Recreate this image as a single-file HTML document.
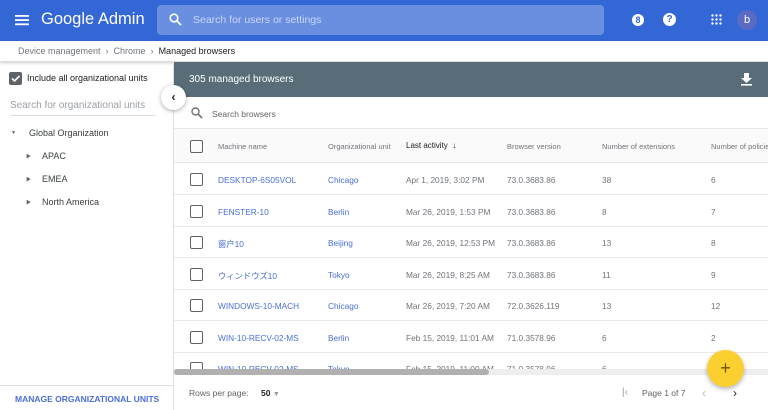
<!DOCTYPE html><html><head><meta charset="utf-8"><style>
*{box-sizing:border-box;margin:0;padding:0}
body{width:768px;height:410px;overflow:hidden;font-family:"Liberation Sans","Noto Sans CJK JP",sans-serif;background:#fff;position:relative;color:#3c4043}
.a{position:absolute;white-space:nowrap}
.hdr{left:0;top:0;width:768px;height:41px;background:#3367d6}
.sb{left:157px;top:5px;width:447px;height:30px;background:#6b8fe0;border-radius:4px}
.cb{width:13px;height:13px;border:1.6px solid #5f6368;border-radius:2px}
.row{left:174px;width:594px;height:31.5px;border-bottom:1px solid #e8e8e8;font-size:8.3px;color:#70757a}
.row span{position:absolute;top:12px}
.lk{color:#4a6fd6}
.tri{font-size:5px;color:#5f6368}
</style></head><body>
<div class="a hdr"></div>
<svg class="a" style="left:15px;top:14px" width="14" height="12"><rect y="1" width="14" height="1.8" fill="#fff"/><rect y="5.2" width="14" height="1.8" fill="#fff"/><rect y="9.4" width="14" height="1.8" fill="#fff"/></svg>
<div class="a" style="left:41px;top:10px;font-size:16.5px;color:#fff">Google Admin</div>
<div class="a sb"></div>
<svg class="a" style="left:169px;top:13px" width="13" height="13"><circle cx="5" cy="5" r="3.8" stroke="#fff" stroke-width="1.6" fill="none"/><line x1="8" y1="8" x2="12" y2="12" stroke="#fff" stroke-width="1.8"/></svg>
<div class="a" style="left:193px;top:14px;font-size:10.5px;color:#c8d6f5">Search for users or settings</div>
<div class="a" style="left:632px;top:14px;width:12px;height:12px;border-radius:50%;background:#fff;color:#3367d6;font-size:9px;text-align:center;line-height:12px;font-weight:bold">8</div>
<div class="a" style="left:663px;top:13px;width:13px;height:13px;border-radius:50%;background:#fff;color:#3367d6;font-size:10px;text-align:center;line-height:13px;font-weight:bold">?</div>
<svg class="a" style="left:711px;top:14px" width="11" height="11" fill="#fff"><circle cx="1.5" cy="1.5" r="1.2"/><circle cx="5.5" cy="1.5" r="1.2"/><circle cx="9.5" cy="1.5" r="1.2"/><circle cx="1.5" cy="5.5" r="1.2"/><circle cx="5.5" cy="5.5" r="1.2"/><circle cx="9.5" cy="5.5" r="1.2"/><circle cx="1.5" cy="9.5" r="1.2"/><circle cx="5.5" cy="9.5" r="1.2"/><circle cx="9.5" cy="9.5" r="1.2"/></svg>
<div class="a" style="left:737px;top:10px;width:20px;height:20px;border-radius:50%;background:#5a6bc4;color:#fff;font-size:11px;text-align:center;line-height:20px">b</div>
<div class="a" style="left:0;top:41px;width:768px;height:21px;border-bottom:1px solid #ddd;box-shadow:0 1px 3px rgba(0,0,0,.2)"></div>
<div class="a" style="left:18px;top:46px;font-size:9px;color:#70757a">Device management &nbsp;›&nbsp; Chrome &nbsp;›&nbsp; <span style="color:#202124">Managed browsers</span></div>
<div class="a" style="left:173px;top:62px;width:1px;height:348px;background:#e0e0e0"></div>
<div class="a" style="left:9px;top:72px;width:13px;height:13px;background:#5f6368;border-radius:2px"></div>
<svg class="a" style="left:9px;top:72px" width="13" height="13"><path d="M3 6.5l2.5 2.5L10.5 4" stroke="#fff" stroke-width="1.6" fill="none"/></svg>
<div class="a" style="left:27px;top:73px;font-size:9px;color:#202124">Include all organizational units</div>
<div class="a" style="left:10px;top:100px;font-size:10px;color:#9aa0a6">Search for organizational units</div>
<div class="a" style="left:10px;top:115px;width:146px;height:1px;background:#ddd"></div>
<div class="a tri" style="left:11px;top:130px">▼</div>
<div class="a" style="left:29px;top:128px;font-size:9px;color:#3c4043">Global Organization</div>
<div class="a tri" style="left:26px;top:153px">▶</div><div class="a" style="left:42px;top:151px;font-size:9px">APAC</div>
<div class="a tri" style="left:26px;top:176px">▶</div><div class="a" style="left:42px;top:174px;font-size:9px">EMEA</div>
<div class="a tri" style="left:26px;top:199px">▶</div><div class="a" style="left:42px;top:197px;font-size:9px">North America</div>
<div class="a" style="left:0;top:385px;width:173px;height:1px;background:#e0e0e0"></div>
<div class="a" style="left:15px;top:394px;font-size:8.5px;color:#4a6fd6;font-weight:bold">MANAGE ORGANIZATIONAL UNITS</div>
<div class="a" style="left:174px;top:62px;width:594px;height:35px;background:#586d77"></div>
<div class="a" style="left:189px;top:74px;font-size:10px;color:#fff">305 managed browsers</div>
<svg class="a" style="left:741px;top:73px" width="11" height="13" fill="#fff"><path d="M3 0h5v5h3L5.5 10 0 5h3z"/><rect y="11" width="11" height="1.6"/></svg>
<div class="a" style="left:161px;top:85px;width:25px;height:25px;border-radius:50%;background:#fff;box-shadow:0 1px 4px rgba(0,0,0,.35);text-align:center;line-height:24px;font-size:12px;font-weight:bold;color:#202124">‹</div>
<svg class="a" style="left:191px;top:107px" width="12" height="12"><circle cx="4.5" cy="4.5" r="3.5" stroke="#70757a" stroke-width="1.4" fill="none"/><line x1="7" y1="7" x2="11" y2="11" stroke="#70757a" stroke-width="1.6"/></svg>
<div class="a" style="left:212px;top:109px;font-size:8.5px;color:#5f6368">Search browsers</div>
<div class="a" style="left:174px;top:128px;width:594px;height:35px;background:#fafafa;border-top:1px solid #e8e8e8;border-bottom:1px solid #e8e8e8;font-size:7.5px;color:#70757a">
<div class="a cb" style="left:16px;top:11px"></div>
<span class="a" style="left:44px;top:13px">Machine name</span><span class="a" style="left:154px;top:13px">Organizational unit</span><span class="a" style="left:232px;top:12px;color:#202124;font-size:8px">Last activity &nbsp;↓</span><span class="a" style="left:333px;top:13px">Browser version</span><span class="a" style="left:428px;top:13px">Number of extensions</span><span class="a" style="left:537px;top:13px">Number of policies</span></div>
<div class="a row" style="top:163px"><div class="a cb" style="left:16px;top:10px"></div><span class="lk" style="left:44px">DESKTOP-6S05VOL</span><span class="lk" style="left:154px">Chicago</span><span style="left:232px">Apr 1, 2019, 3:02 PM</span><span style="left:333px">73.0.3683.86</span><span style="left:428px">38</span><span style="left:537px">6</span></div>
<div class="a row" style="top:195px"><div class="a cb" style="left:16px;top:10px"></div><span class="lk" style="left:44px">FENSTER-10</span><span class="lk" style="left:154px">Berlin</span><span style="left:232px">Mar 26, 2019, 1:53 PM</span><span style="left:333px">73.0.3683.86</span><span style="left:428px">8</span><span style="left:537px">7</span></div>
<div class="a row" style="top:226px"><div class="a cb" style="left:16px;top:10px"></div><span class="lk" style="left:44px">窗户10</span><span class="lk" style="left:154px">Beijing</span><span style="left:232px">Mar 26, 2019, 12:53 PM</span><span style="left:333px">73.0.3683.86</span><span style="left:428px">13</span><span style="left:537px">8</span></div>
<div class="a row" style="top:258px"><div class="a cb" style="left:16px;top:10px"></div><span class="lk" style="left:44px">ウィンドウズ10</span><span class="lk" style="left:154px">Tokyo</span><span style="left:232px">Mar 26, 2019, 8:25 AM</span><span style="left:333px">73.0.3683.86</span><span style="left:428px">11</span><span style="left:537px">9</span></div>
<div class="a row" style="top:289px"><div class="a cb" style="left:16px;top:10px"></div><span class="lk" style="left:44px">WINDOWS-10-MACH</span><span class="lk" style="left:154px">Chicago</span><span style="left:232px">Mar 26, 2019, 7:20 AM</span><span style="left:333px">72.0.3626.119</span><span style="left:428px">13</span><span style="left:537px">12</span></div>
<div class="a row" style="top:321px"><div class="a cb" style="left:16px;top:10px"></div><span class="lk" style="left:44px">WIN-10-RECV-02-MS</span><span class="lk" style="left:154px">Berlin</span><span style="left:232px">Feb 15, 2019, 11:01 AM</span><span style="left:333px">71.0.3578.96</span><span style="left:428px">6</span><span style="left:537px">2</span></div>
<div class="a" style="left:174px;top:352px;width:594px;height:18px;overflow:hidden;font-size:8.3px;color:#70757a"><div class="a cb" style="left:16px;top:10px"></div><span class="a lk" style="left:44px;top:12px">WIN-10-RECV-02-MS</span><span class="a lk" style="left:154px;top:12px">Tokyo</span><span class="a" style="left:232px;top:12px">Feb 15, 2019, 11:00 AM</span><span class="a" style="left:333px;top:12px">71.0.3578.96</span><span class="a" style="left:428px;top:12px">6</span></div>
<div class="a" style="left:174px;top:369px;width:594px;height:6px;background:#eee"></div>
<div class="a" style="left:174px;top:369px;width:315px;height:6px;background:#b0b0b0;border-radius:3px"></div>
<div class="a" style="left:189px;top:388px;font-size:8.5px;color:#5f6368">Rows per page:</div>
<div class="a" style="left:261px;top:388px;font-size:8.5px;color:#202124;font-weight:bold">50 <span style="color:#999;font-size:7px;font-weight:normal">▼</span></div>
<div class="a" style="left:622px;top:387px;font-size:10px;color:#9aa0a6">|‹</div>
<div class="a" style="left:642px;top:388px;font-size:8.5px;color:#5f6368">Page 1 of 7</div>
<div class="a" style="left:702px;top:386px;font-size:12px;color:#bbb">‹</div>
<div class="a" style="left:733px;top:386px;font-size:12px;color:#202124">›</div>
<div class="a" style="left:707px;top:350px;width:37px;height:37px;border-radius:50%;background:#fbcf2f;box-shadow:0 2px 5px rgba(0,0,0,.3);text-align:center;line-height:36px;font-size:18px;color:#6d5600">+</div>
</body></html>
